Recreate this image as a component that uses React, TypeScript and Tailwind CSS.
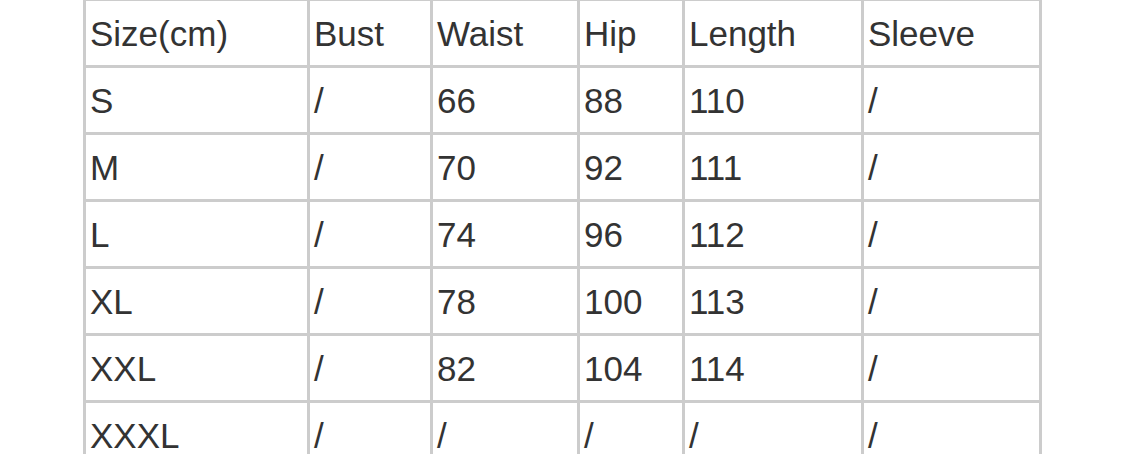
const headers = ['Size(cm)', 'Bust', 'Waist', 'Hip', 'Length', 'Sleeve'];

const rows = [
  ['S', '/', '66', '88', '110', '/'],
  ['M', '/', '70', '92', '111', '/'],
  ['L', '/', '74', '96', '112', '/'],
  ['XL', '/', '78', '100', '113', '/'],
  ['XXL', '/', '82', '104', '114', '/'],
  ['XXXL', '/', '/', '/', '/', '/'],
];

function Cell({ text }: { text: string }) {
  return (
    <div className="bg-white flex items-center pl-[4px] pt-[2px] text-[35px] leading-[40px] text-[#333333] whitespace-nowrap">
      {text}
    </div>
  );
}

export default function App() {
  return (
    <div className="w-[1125px] h-[454px] overflow-hidden bg-white font-['Liberation_Sans',Arial,sans-serif]">
      <div className="mx-auto mt-[-2px] w-[959px] grid grid-cols-[221px_120px_144px_102px_176px_175px] auto-rows-[64px] gap-[3px] p-[3px] bg-[#cccccc]">
        {headers.map((h) => (
          <Cell key={h} text={h} />
        ))}
        {rows.map((row, i) =>
          row.map((v, j) => <Cell key={`${i}-${j}`} text={v} />)
        )}
      </div>
    </div>
  );
}
